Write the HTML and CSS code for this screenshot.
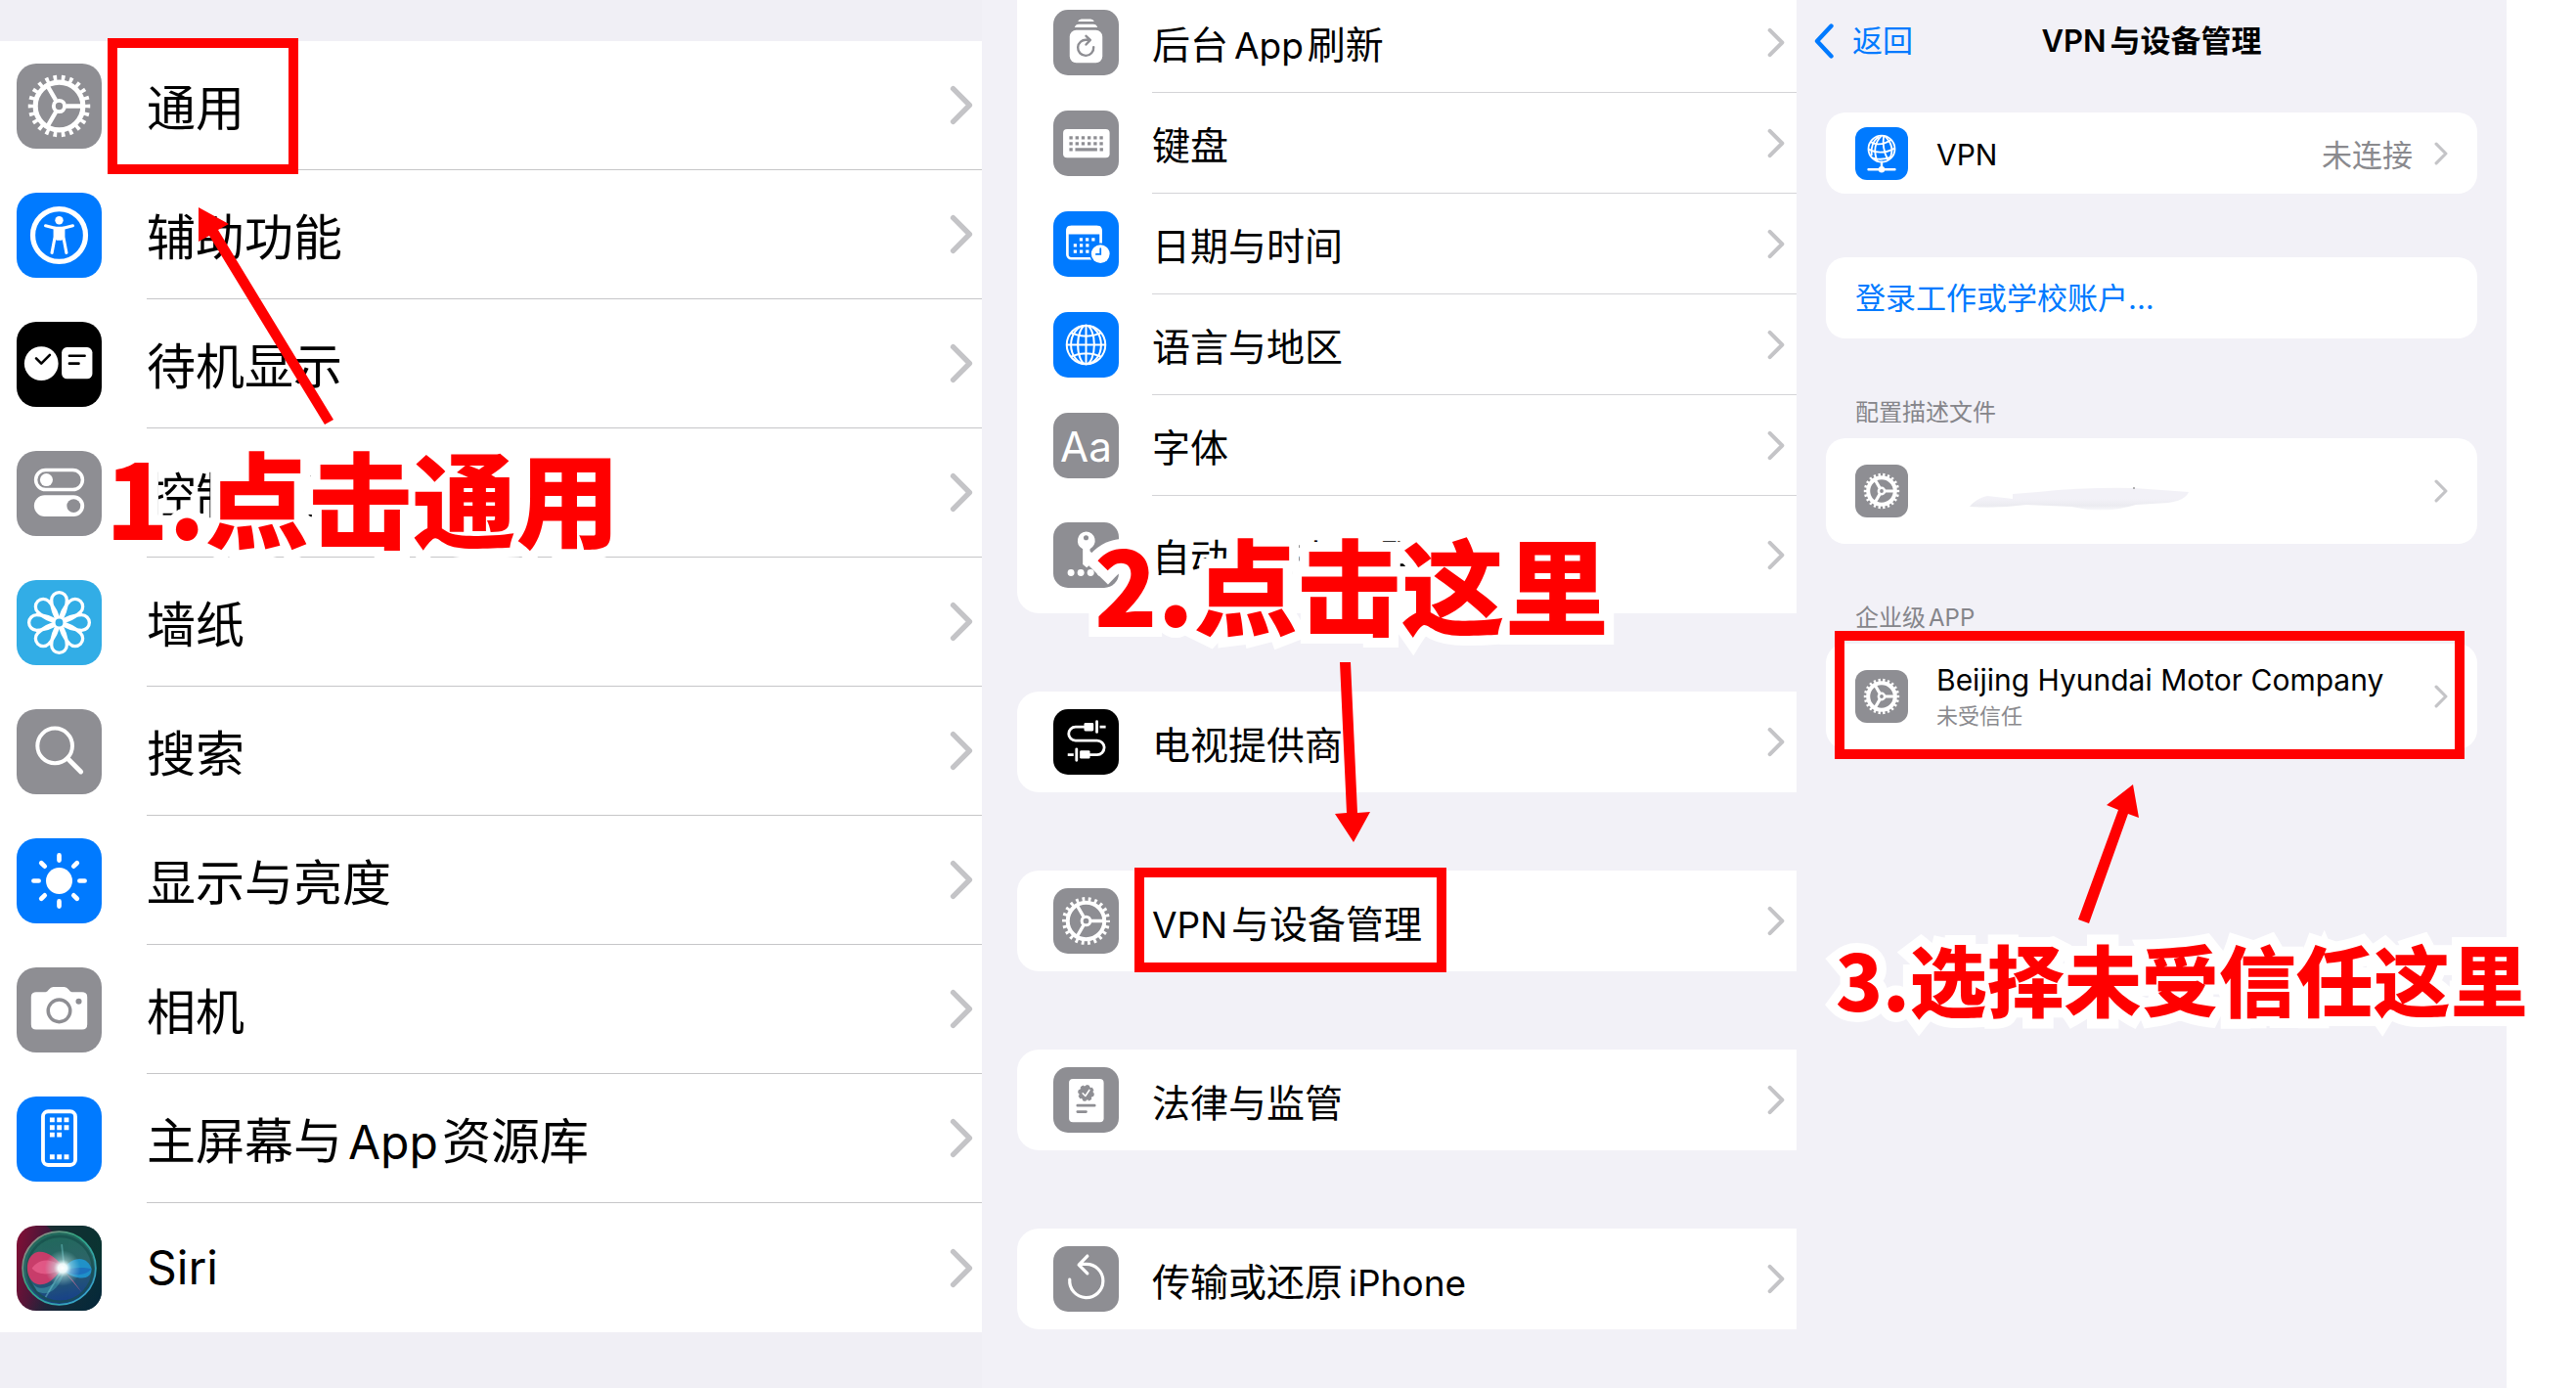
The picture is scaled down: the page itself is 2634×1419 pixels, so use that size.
FILE: index.html
```html
<!DOCTYPE html>
<html lang="zh-CN">
<head>
<meta charset="utf-8">
<title>信任企业级 App 教程</title>
<link rel="stylesheet" href="styles.css">
</head>
<body>
<svg class="sprite" aria-hidden="true">
  <symbol id="gear" viewBox="0 0 100 100">
    <g fill="none" stroke="#fff">
      <circle cx="50" cy="50" r="28" stroke-width="6"/>
      <circle cx="50" cy="50" r="33" stroke-width="7" pathLength="220" stroke-dasharray="4.4 5.6" stroke-dashoffset="2.2"/>
      <circle cx="50" cy="50" r="6.5" stroke-width="4.5"/>
      <path stroke-width="5" d="M58 50H77M46 43L36.500 26.600M46 57L36.500 73.400"/>
    </g>
  </symbol>
  <symbol id="gear-small" viewBox="7 7 86 86">
    <g fill="none" stroke="#fff">
      <circle cx="50" cy="50" r="22" stroke-width="6.500"/>
      <circle cx="50" cy="50" r="26" stroke-width="6" pathLength="220" stroke-dasharray="4.800 5.200" stroke-dashoffset="2.400"/>
      <circle cx="50" cy="50" r="5" stroke-width="4"/>
      <path stroke-width="5" d="M56 50H71M47 45L39.500 32M47 55L39.500 68"/>
    </g>
  </symbol>
  <symbol id="chevron" viewBox="0 0 20 34">
    <path d="M3 3L17 17L3 31" fill="none" stroke="#c4c4c7" stroke-width="4.500" stroke-linecap="round" stroke-linejoin="round"/>
  </symbol>
</svg>

<main class="guide">
  <section class="panel panel-settings">
    <ul class="list">
      <li><a class="row" href="#general">
        <span class="icon gray"><svg><use href="#gear"/></svg></span>
        <span class="body"><span class="label">通用</span><svg class="chev"><use href="#chevron"/></svg></span></a></li>
      <li><a class="row" href="#accessibility">
        <span class="icon blue"><svg viewBox="0 0 100 100"><circle cx="50" cy="50" r="31" fill="none" stroke="#fff" stroke-width="6"/><circle cx="50" cy="32.500" r="4.800" fill="#fff"/><path d="M34 38.800L45 41.500V52L41.500 70.500M66 38.800L55 41.500V52L58.500 70.500" fill="none" stroke="#fff" stroke-width="3.600" stroke-linecap="round"/><path d="M44 40H56V53L53 56H47L44 53Z" fill="#fff"/></svg></span>
        <span class="body"><span class="label">辅助功能</span><svg class="chev"><use href="#chevron"/></svg></span></a></li>
      <li><a class="row" href="#standby">
        <span class="icon black"><svg viewBox="0 0 100 100"><circle cx="29" cy="49" r="20" fill="#fff"/><path d="M23 43L29 49L39 39" fill="none" stroke="#000" stroke-width="3" stroke-linecap="round" stroke-linejoin="round"/><rect x="53" y="30" width="36" height="37" rx="6" fill="#fff"/><path d="M62 40H80M62 49H73" stroke="#000" stroke-width="3" stroke-linecap="round"/></svg></span>
        <span class="body"><span class="label">待机显示</span><svg class="chev"><use href="#chevron"/></svg></span></a></li>
      <li><a class="row" href="#control">
        <span class="icon gray"><svg viewBox="0 0 100 100"><rect x="22.500" y="22.500" width="55" height="23" rx="11.500" fill="none" stroke="#fff" stroke-width="4"/><circle cx="35" cy="34" r="7.500" fill="#fff"/><rect x="20.500" y="52" width="59" height="25" rx="12.500" fill="#fff"/><circle cx="67" cy="64.500" r="8" fill="#8e8e93"/></svg></span>
        <span class="body"><span class="label">控制中心</span><svg class="chev"><use href="#chevron"/></svg></span></a></li>
      <li><a class="row" href="#wallpaper">
        <span class="icon sky"><svg viewBox="0 0 100 100"><defs><path id="petal" d="M50 50C43 40 41 29 41 23.500A9 9 0 0 1 59 23.500C59 29 57 40 50 50Z"/></defs><g fill="none" stroke="#fff" stroke-width="3.800" stroke-linejoin="round"><use href="#petal"/><use href="#petal" transform="rotate(45 50 50)"/><use href="#petal" transform="rotate(90 50 50)"/><use href="#petal" transform="rotate(135 50 50)"/><use href="#petal" transform="rotate(180 50 50)"/><use href="#petal" transform="rotate(225 50 50)"/><use href="#petal" transform="rotate(270 50 50)"/><use href="#petal" transform="rotate(315 50 50)"/></g><circle cx="50" cy="50" r="6" fill="#32ade6" stroke="#fff" stroke-width="3"/></svg></span>
        <span class="body"><span class="label">墙纸</span><svg class="chev"><use href="#chevron"/></svg></span></a></li>
      <li><a class="row" href="#search">
        <span class="icon gray"><svg viewBox="0 0 100 100"><g fill="none" stroke="#fff" stroke-linecap="round"><circle cx="45" cy="43" r="20.500" stroke-width="4.600"/><path d="M60 58L75.500 73.500" stroke-width="5.600"/></g></svg></span>
        <span class="body"><span class="label">搜索</span><svg class="chev"><use href="#chevron"/></svg></span></a></li>
      <li><a class="row" href="#display">
        <span class="icon blue"><svg viewBox="0 0 100 100"><circle cx="50" cy="50" r="15.500" fill="#fff"/><path d="M50 20V26M50 74V80M20 50H26M74 50H80M29 29L33 33M67 67L71 71M29 71L33 67M67 33L71 29" stroke="#fff" stroke-width="5.400" stroke-linecap="round"/></svg></span>
        <span class="body"><span class="label">显示与亮度</span><svg class="chev"><use href="#chevron"/></svg></span></a></li>
      <li><a class="row" href="#camera">
        <span class="icon gray"><svg viewBox="0 0 100 100"><path d="M17 35Q17 29 23 29H34Q36 29 38 26Q40 23 43 23H56Q59 23 61 26Q63 29 65 29H77Q83 29 83 35V67Q83 73 77 73H23Q17 73 17 67Z" fill="#fff"/><circle cx="50" cy="51" r="13" fill="none" stroke="#8e8e93" stroke-width="4"/><circle cx="73" cy="40" r="3.500" fill="#8e8e93"/></svg></span>
        <span class="body"><span class="label">相机</span><svg class="chev"><use href="#chevron"/></svg></span></a></li>
      <li><a class="row" href="#home">
        <span class="icon blue"><svg viewBox="0 0 100 100"><rect x="31" y="17.500" width="38" height="63" rx="6" fill="none" stroke="#fff" stroke-width="4.400"/><path d="M39 27.500H62M39 36.500H62M39 45H54M39 71H62" stroke="#fff" stroke-width="5.600" stroke-dasharray="5.600 2.800"/></svg></span>
        <span class="body"><span class="label">主屏幕与<span class="latin">App</span>资源库</span><svg class="chev"><use href="#chevron"/></svg></span></a></li>
      <li><a class="row" href="#siri">
        <span class="icon siri"><svg viewBox="0 0 100 100">
          <defs>
            <linearGradient id="sbg" x1="0" y1="0.3" x2="1" y2="0.5"><stop offset="0" stop-color="#7c0f35"/><stop offset=".45" stop-color="#2a1c3c"/><stop offset="1" stop-color="#072a38"/></linearGradient>
            <linearGradient id="sorb" x1="0.3" y1="0" x2="0.5" y2="1"><stop offset="0" stop-color="#1f6a5a"/><stop offset=".5" stop-color="#2d6468"/><stop offset="1" stop-color="#163f8c"/></linearGradient>
            <linearGradient id="sring" x1="0" y1="0" x2="1" y2="1"><stop offset="0" stop-color="#c07a86"/><stop offset=".4" stop-color="#2fa780"/><stop offset="1" stop-color="#39a2de"/></linearGradient>
            <radialGradient id="sglow"><stop offset="0" stop-color="#fff"/><stop offset=".25" stop-color="#f4ffff" stop-opacity=".95"/><stop offset=".5" stop-color="#c8f0f0" stop-opacity=".45"/><stop offset="1" stop-color="#a8e8ec" stop-opacity="0"/></radialGradient>
            <linearGradient id="sdark" x1="0" y1="0" x2="1" y2="1"><stop offset=".5" stop-color="#0b3b31" stop-opacity="0"/><stop offset="1" stop-color="#06243c"/></linearGradient>
          </defs>
          <rect width="100" height="100" fill="url(#sbg)"/><path d="M35 0H100V60Z" fill="#0a382f" opacity=".7"/><rect width="100" height="100" fill="url(#sdark)"/>
          <circle cx="50" cy="50" r="43" fill="url(#sorb)" stroke="url(#sring)" stroke-width="2"/>
          <circle cx="51" cy="51" r="38.500" fill="none" stroke="#174e4c" stroke-width="3" opacity=".7"/>
          <path d="M18 66C24 78 42 76 56 54C50 76 36 84 24 77Z" fill="#3f9aa8" opacity=".6"/>
          <path d="M56 50C46 36 30 26 20 33C8 41 11 66 25 69C40 71 45 58 56 50Z" fill="#d9386a" opacity=".9"/>
          <path d="M56 50C36 34 24 42 18 50C26 60 42 58 56 50Z" fill="#f5709a" opacity=".55"/>
          <path d="M54 52C66 34 84 36 88 51C88 66 68 64 54 52Z" fill="#1f9ad8" opacity=".85"/>
          <path d="M54 52C66 50 76 48 88 51C80 60 66 60 54 52Z" fill="#1c5fb8" opacity=".6"/>
          <path d="M56 54L77 79L66 64Z" fill="#d87098" opacity=".7"/>
          <path d="M52 54L34 84M56 50L53 22" stroke="#7bd8dc" stroke-width="2" opacity=".4"/>
          <circle cx="54" cy="50" r="21" fill="url(#sglow)"/>
        </svg></span>
        <span class="body"><span class="label"><span class="latin-only">Siri</span></span><svg class="chev"><use href="#chevron"/></svg></span></a></li>
    </ul>
    <div class="mark mark-general"></div>
    <svg class="arrow arrow-1" viewBox="0 0 140 224"><path fill="#f00" d="M1 1L32 18L21 24L139 218L130 223L12 30L1 36Z"/></svg>
    <p class="callout callout-1" data-text="1.点击通用">1.点击通用</p>
  </section>

  <section class="panel panel-general">
    <ul class="card card-top">
      <li><a class="row" href="#refresh">
        <span class="icon gray"><svg viewBox="0 0 100 100"><rect x="25" y="31" width="50" height="50" rx="10" fill="#fff"/><path d="M32.500 27Q34 22 39 22H61Q66 22 67.500 27ZM37.500 18Q39 14 43 14H57Q61 14 62.500 18Z" fill="#fff"/><path d="M61.500 57A12 12 0 1 1 51 46H56M50 40L56.500 46L50 53" fill="none" stroke="#8e8e93" stroke-width="3.600" stroke-linecap="round" stroke-linejoin="round"/></svg></span>
        <span class="body"><span class="label">后台<span class="latin">App</span>刷新</span><svg class="chev"><use href="#chevron"/></svg></span></a></li>
      <li><a class="row" href="#keyboard">
        <span class="icon gray"><svg viewBox="0 0 100 100"><rect x="15" y="28.500" width="71" height="43.500" rx="6" fill="#fff"/><path d="M24.500 41.500H76M24.500 50.500H76" stroke="#8e8e93" stroke-width="5" stroke-dasharray="5 4.250"/><path d="M24.500 59.500H29.500M33.500 59.500H67M71 59.500H76" stroke="#8e8e93" stroke-width="5"/></svg></span>
        <span class="body"><span class="label">键盘</span><svg class="chev"><use href="#chevron"/></svg></span></a></li>
      <li><a class="row" href="#date">
        <span class="icon blue"><svg viewBox="0 0 100 100"><rect x="21.500" y="24" width="51" height="48" rx="6" fill="none" stroke="#fff" stroke-width="4"/><path d="M20 35V28Q20 22 26 22H68Q74 22 74 28V35Z" fill="#fff"/><path d="M40 43H64M31 52H55M31 61.500H55" stroke="#fff" stroke-width="4.800" stroke-dasharray="4.800 4.500"/><circle cx="72" cy="65" r="16.500" fill="#007aff"/><circle cx="72" cy="65" r="14" fill="#fff"/><path d="M72 57V65.500H65.500" fill="none" stroke="#007aff" stroke-width="2.600" stroke-linecap="round"/></svg></span>
        <span class="body"><span class="label">日期与时间</span><svg class="chev"><use href="#chevron"/></svg></span></a></li>
      <li><a class="row" href="#language">
        <span class="icon blue"><svg viewBox="0 0 100 100"><g fill="none" stroke="#fff" stroke-width="3"><circle cx="50" cy="50" r="29.500"/><ellipse cx="50" cy="50" rx="12.500" ry="29.500"/><ellipse cx="50" cy="50" rx="23" ry="29.500"/><path d="M50 20V80M20 50H80M27 32Q50 42 73 32M27 68Q50 58 73 68"/></g></svg></span>
        <span class="body"><span class="label">语言与地区</span><svg class="chev"><use href="#chevron"/></svg></span></a></li>
      <li><a class="row" href="#fonts">
        <span class="icon gray"><svg viewBox="0 0 100 100"><text class="aa" x="50" y="74" text-anchor="middle">Aa</text></svg></span>
        <span class="body"><span class="label">字体</span><svg class="chev"><use href="#chevron"/></svg></span></a></li>
      <li><a class="row row-tall" href="#autofill">
        <span class="icon gray"><svg viewBox="0 0 100 100"><path d="M50 14A14 14 0 0 1 56 40.500L56 44L61 49L56 54L61 60L51 69L45 64V40.500A14 14 0 0 1 50 14Z" fill="#fff"/><circle cx="50" cy="23.500" r="3.800" fill="#8e8e93"/><g fill="#fff"><circle cx="27" cy="77" r="5.200"/><circle cx="42" cy="77" r="5.200"/><circle cx="57" cy="77" r="5.200"/><circle cx="72" cy="77" r="5.200"/></g></svg></span>
        <span class="body"><span class="label">自动填充与密码</span><svg class="chev"><use href="#chevron"/></svg></span></a></li>
    </ul>
    <ul class="card">
      <li><a class="row" href="#tv">
        <span class="icon black"><svg viewBox="0 0 100 100"><g fill="none" stroke="#fff" stroke-width="4.200"><path d="M50 27H34A10.500 10.500 0 0 0 34 48H67A10.500 10.500 0 0 1 67 69.500H55" stroke-linecap="round"/><path d="M66.500 19V35M35.500 61V78" stroke-linecap="round"/><path d="M71 27H80M22 69.500H31"/></g><rect x="47" y="21" width="14.500" height="12.500" rx="2" fill="#fff"/><rect x="40.500" y="63" width="15.500" height="12.500" rx="2" fill="#fff"/></svg></span>
        <span class="body"><span class="label">电视提供商</span><svg class="chev"><use href="#chevron"/></svg></span></a></li>
    </ul>
    <ul class="card">
      <li><a class="row" href="#vpn-device">
        <span class="icon gray"><svg><use href="#gear"/></svg></span>
        <span class="body"><span class="label"><span class="latin latin-start">VPN</span>与设备管理</span><svg class="chev"><use href="#chevron"/></svg></span></a></li>
    </ul>
    <ul class="card">
      <li><a class="row" href="#legal">
        <span class="icon gray"><svg viewBox="0 0 100 100"><rect x="24" y="18" width="53" height="66" rx="6" fill="#fff"/><circle cx="50" cy="39.500" r="11" fill="#8e8e93"/><circle cx="50" cy="39.500" r="10.500" fill="none" stroke="#8e8e93" stroke-width="4" pathLength="80" stroke-dasharray="6 4"/><path d="M45 40L49 44L55 35" fill="none" stroke="#fff" stroke-width="2.400" stroke-linecap="round" stroke-linejoin="round"/><path d="M37 58.500H63M37 68H50" stroke="#8e8e93" stroke-width="4" stroke-linecap="round"/></svg></span>
        <span class="body"><span class="label">法律与监管</span><svg class="chev"><use href="#chevron"/></svg></span></a></li>
    </ul>
    <ul class="card">
      <li><a class="row" href="#transfer">
        <span class="icon gray"><svg viewBox="0 0 100 100"><path d="M25 51A25.500 25.500 0 1 0 50 27.500H40M52 15L39 28.500L52 41.500" fill="none" stroke="#fff" stroke-width="4.800" stroke-linecap="round" stroke-linejoin="round"/></svg></span>
        <span class="body"><span class="label">传输或还原<span class="latin">iPhone</span></span><svg class="chev"><use href="#chevron"/></svg></span></a></li>
    </ul>
    <div class="mark mark-vpn"></div>
    <svg class="arrow arrow-2" viewBox="0 0 40 186"><path fill="#f00" d="M6 1H17L24 155L37 154L20 185L1 156L13 155Z"/></svg>
    <p class="callout callout-2" data-text="2.点击这里">2.点击这里</p>
  </section>

  <section class="panel panel-vpn">
    <header class="nav">
      <button class="back" type="button"><svg viewBox="0 0 20 36"><path d="M17.500 2.500L3 18L17.500 33.500" fill="none" stroke="#007aff" stroke-width="4.400" stroke-linecap="round" stroke-linejoin="round"/></svg>返回</button>
      <h1><span class="latin latin-start">VPN</span>与设备管理</h1>
    </header>
    <div class="card">
      <a class="row" href="#vpn">
        <span class="icon blue"><svg viewBox="0 0 100 100"><g fill="none" stroke="#fff" stroke-width="3.400"><circle cx="50" cy="41" r="25"/><path d="M50 16Q30 36 42 65M54 16Q50 40 62 62M56 17Q76 36 66 58M29 28Q46 38 68 24M25 42Q48 54 75 40M32 58Q50 64 69 56M44 18Q28 30 31 54"/></g><path d="M50 66V80M25 80H75" stroke="#fff" stroke-width="4.400" stroke-linecap="round"/><circle cx="50" cy="80" r="6" fill="#fff"/></svg></span>
        <span class="body"><span class="label company">VPN</span><span class="value">未连接</span><svg class="chev"><use href="#chevron"/></svg></span></a>
    </div>
    <div class="card card-login"><a class="login" href="#login">登录工作或学校账户...</a></div>
    <h2 class="group">配置描述文件</h2>
    <div class="card">
      <a class="row row-tall" href="#profile" aria-label="描述文件">
        <span class="icon gray"><svg><use href="#gear-small"/></svg></span>
        <span class="body"><svg class="smudge" viewBox="0 0 230 40"><defs><linearGradient id="smear" x1="0" y1="0" x2="0" y2="1"><stop offset=".5" stop-color="#f2f1f7"/><stop offset=".8" stop-color="#ebebf0"/><stop offset="1" stop-color="#f8f8fb"/></linearGradient></defs><path d="M2 22Q8 14 20 11L46 14V9L72 7Q120 2 170 3L226 7Q222 16 205 18L172 20Q140 30 106 22L60 20Q30 24 2 22Z" fill="url(#smear)"/><circle cx="170" cy="3" r="1" fill="#999"/></svg><svg class="chev"><use href="#chevron"/></svg></span></a>
    </div>
    <h2 class="group">企业级<span class="latin-group">APP</span></h2>
    <div class="card">
      <a class="row row-tall" href="#company">
        <span class="icon gray"><svg><use href="#gear-small"/></svg></span>
        <span class="body"><span class="label company">Beijing Hyundai Motor Company<small>未受信任</small></span><svg class="chev"><use href="#chevron"/></svg></span></a>
    </div>
    <div class="mark mark-company"></div>
    <svg class="arrow arrow-3" viewBox="0 0 64 144"><path fill="#f00" d="M57 1L63 35L52 31L12 143L1 139L42 27L30 22Z"/></svg>
    <p class="callout callout-3" data-text="3.选择未受信任这里">3.选择未受信任这里</p>
  </section>
</main>
</body>
</html>
```
FILE: styles.css
```css
* { box-sizing: border-box; }
body {
  margin: 0;
  background: #fff;
  color: #000;
  font-family: Inter, "Noto Sans CJK SC", sans-serif;
}
ul, p, h1, h2 { margin: 0; padding: 0; list-style: none; }
a { color: inherit; text-decoration: none; }
.sprite { position: absolute; width: 0; height: 0; }

.guide {
  display: grid;
  grid-template-columns: 1004fr 833fr 726fr 71fr;
  min-height: 100vh;
  overflow: hidden;
}
.panel { position: relative; background: #f2f1f7; min-width: 0; }

/* Rows */
.row { display: flex; align-items: stretch; }
.icon {
  flex: none;
  align-self: center;
  overflow: hidden;
}
.icon svg { display: block; width: 100%; height: 100%; }
.gray { background: #8e8e93; }
.blue { background: #007aff; }
.black { background: #000; }
.sky { background: #32ade6; }
.aa { font-size: 63px; fill: #fff; }
.body { flex: 1; display: flex; align-items: center; min-width: 0; }
.label { flex: 1; white-space: nowrap; }
.chev { flex: none; }
.latin { margin: 0 4px 0 6px; }
.latin-start { margin-left: 0; }

/* Settings list */
.panel-settings { background: #f0eff5; padding-top: 42px; }
.list { background: #fff; }
.panel-settings .row { height: 132px; padding-left: 17px; gap: 46px; font-size: 50px; }
.panel-settings .icon { width: 87px; height: 87px; border-radius: 20px; }
.panel-settings .body { border-bottom: 1px solid #c6c6c8; padding-right: 9px; }
.panel-settings li:last-child .body { border-bottom: 0; }
.panel-settings .label { padding-bottom: 2px; }
.panel-settings .chev { width: 24px; height: 41px; }
.panel-settings .latin, .latin-only { font-size: 48px; }

/* General list */
.panel-general { padding-left: 36px; }
.panel-general .card { background: #fff; border-radius: 22px 0 0 22px; margin-bottom: 80px; }
.panel-general .card-top { margin-top: -8px; border-top-left-radius: 0; }
.panel-general .row { height: 103px; padding-left: 37px; gap: 34px; font-size: 39px; }
.panel-general .row-tall { height: 120px; }
.panel-general .icon { width: 67px; height: 67px; border-radius: 15px; }
.panel-general .body { border-bottom: 1px solid #d4d4d7; padding-right: 12px; }
.panel-general li:last-child .body { border-bottom: 0; }
.panel-general .chev { width: 18px; height: 31px; }
.panel-general .latin { font-size: 37px; }

/* VPN and device management */
.panel-vpn { padding: 0 30px; }
.nav { display: flex; justify-content: center; align-items: center; height: 83px; margin-bottom: 32px; position: relative; }
.nav h1 { font-size: 31px; font-weight: 600; line-height: 40px; }
.back {
  position: absolute;
  left: -12px;
  display: flex;
  align-items: center;
  gap: 19px;
  padding: 0;
  border: 0;
  background: none;
  color: #007aff;
  font: inherit;
  font-size: 31px;
  line-height: 40px;
}
.back svg { width: 20px; height: 36px; }
.panel-vpn .card { background: #fff; border-radius: 20px; }
.panel-vpn .row { height: 83px; padding: 0 30px; gap: 29px; font-size: 31px; }
.panel-vpn .row-tall { height: 108px; }
.panel-vpn .icon { width: 54px; height: 54px; border-radius: 12px; }
.panel-vpn .chev { width: 14px; height: 24px; margin-left: 22px; }
.value { color: #8a8a8e; }
.panel-vpn .card-login { margin-top: 65px; }
.login { display: block; padding: 0 30px; line-height: 83px; font-size: 31px; color: #007aff; }
.group {
  height: 102px;
  padding: 62px 30px 0;
  font-size: 24px;
  line-height: 28px;
  font-weight: 400;
  color: #85858a;
}
.latin-group { margin-left: 3px; }
.company { font-size: 30px; line-height: 38px; padding-top: 2px; }
.company small { display: block; font-size: 22px; line-height: 36px; color: #8a8a8e; }
.smudge { width: 230px; height: 40px; margin: 28px auto 0 32px; }

/* Annotations lying over the screens */
.mark { position: absolute; border: 10px solid #f00; }
.mark-general { left: 110px; top: 39px; width: 195px; height: 139px; }
.mark-vpn { left: 156px; top: 887px; width: 319px; height: 107px; }
.mark-company { left: 39px; top: 645px; width: 644px; height: 131px; }
.arrow { position: absolute; }
.arrow-1 { left: 202px; top: 211px; width: 140px; height: 224px; }
.arrow-2 { left: 360px; top: 676px; width: 40px; height: 186px; }
.arrow-3 { left: 287px; top: 801px; width: 64px; height: 144px; }
.callout {
  position: absolute;
  z-index: 1;
  white-space: nowrap;
  color: #f00;
  font-family: "Noto Sans CJK SC", sans-serif;
  font-weight: 900;
  font-size: 106px;
  line-height: 120px;
  -webkit-text-stroke: 20px #fff;
  stroke-linejoin: round;
}
.callout::after {
  content: attr(data-text);
  position: absolute;
  left: 0;
  top: 0;
  -webkit-text-stroke: 0;
}
.callout-1 { left: 108px; top: 446px; }
.callout-2 { left: 115px; top: 535px; }
.callout-3 { left: 40px; top: 940px; font-size: 79px; }
```
